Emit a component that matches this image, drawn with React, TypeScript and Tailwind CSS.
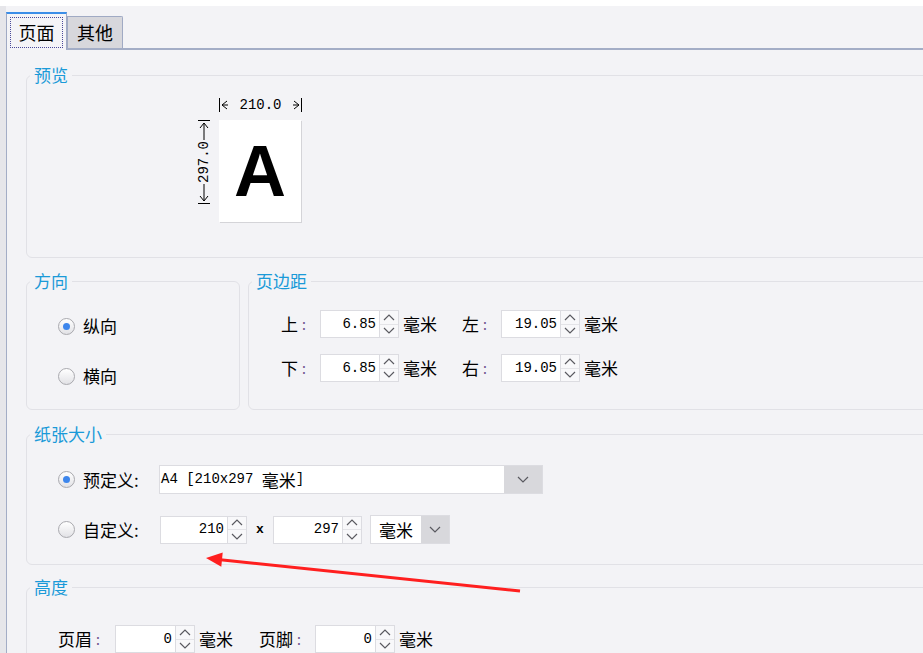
import type { ReactNode } from 'react'

const cjk = "font-['Noto_Sans_CJK_SC',sans-serif]"
const mono = "font-['Liberation_Mono','Noto_Sans_CJK_SC',monospace]"

function Group({ title, className, children }: { title: string; className?: string; children: ReactNode }) {
  return (
    <fieldset className={`border border-[#e1e1e6] rounded-[6px] ${className ?? ''}`}>
      <legend className="ml-[3px] px-[4px] text-[17px] leading-[20px] text-[#1a9ad8]">{title}</legend>
      {children}
    </fieldset>
  )
}

function Radio({ checked, label }: { checked?: boolean; label: string }) {
  return (
    <div className="flex items-center h-[28px]">
      <span className="w-[17px] h-[17px] rounded-full border border-[#a9a9ae] bg-linear-to-b from-white to-[#e2e2e6] flex items-center justify-center">
        {checked && <span className="w-[7px] h-[7px] rounded-full bg-[#3d86ec]" />}
      </span>
      <span className="ml-[8px] text-[17px] text-black">{label}</span>
    </div>
  )
}

function Chevron({ up }: { up?: boolean }) {
  return (
    <svg width="12" height="7" viewBox="0 0 12 7">
      <polyline
        points={up ? '1,6 6,1 11,6' : '1,1 6,6 11,1'}
        fill="none"
        stroke="#5a5a60"
        strokeWidth="1.2"
      />
    </svg>
  )
}

function Spin({ value, width }: { value: string; width: number }) {
  return (
    <div className="flex h-[28px] shrink-0">
      <div
        className={`bg-white border border-[#dcdce1] border-r-0 flex items-center justify-end pr-[3px] text-[14px] text-black ${mono}`}
        style={{ width }}
      >
        {value}
      </div>
      <div className="w-[20px] flex flex-col border border-[#dcdce1] bg-[#f8f8fa]">
        <div className="flex-1 flex items-center justify-center border-b border-[#e4e4e8]">
          <Chevron up />
        </div>
        <div className="flex-1 flex items-center justify-center">
          <Chevron />
        </div>
      </div>
    </div>
  )
}

function Label({ text, width }: { text: string; width: number }) {
  return (
    <div className="flex items-center shrink-0 text-[17px] text-black" style={{ width }}>
      <span>{text}</span>
      <span className="ml-[4px] text-[#6d4d8c] text-[14px]">:</span>
    </div>
  )
}

function Unit() {
  return <span className="ml-[4px] shrink-0 text-[17px] text-black">毫米</span>
}

function Preview() {
  return (
    <div className="flex pl-[169px] pt-[12px] pb-[35px]">
      <div className="w-[23px] pt-[23px] flex flex-col items-center pr-[8px]">
        <svg width="14" height="21" viewBox="0 0 14 21">
          <line x1="1" y1="0.5" x2="13" y2="0.5" stroke="#000" />
          <line x1="7" y1="3" x2="7" y2="20" stroke="#000" />
          <polyline points="3,8 7,3 11,8" fill="none" stroke="#000" />
        </svg>
        <span className={`my-[5px] text-[14px] leading-[14px] text-black [writing-mode:vertical-rl] rotate-180 ${mono}`}>
          297.0
        </span>
        <svg width="14" height="21" viewBox="0 0 14 21">
          <line x1="7" y1="1" x2="7" y2="18" stroke="#000" />
          <polyline points="3,13 7,18 11,13" fill="none" stroke="#000" />
          <line x1="1" y1="20.5" x2="13" y2="20.5" stroke="#000" />
        </svg>
      </div>
      <div className="flex flex-col">
        <div className="w-[83px] h-[16px] flex items-center justify-between">
          <svg width="10" height="16" viewBox="0 0 10 16">
            <line x1="0.5" y1="1" x2="0.5" y2="15" stroke="#000" />
            <polyline points="8,4 3,8 8,12" fill="none" stroke="#000" />
            <line x1="3" y1="8" x2="9" y2="8" stroke="#000" />
          </svg>
          <span className={`text-[14px] leading-[16px] text-black ${mono}`}>210.0</span>
          <svg width="10" height="16" viewBox="0 0 10 16">
            <line x1="9.5" y1="1" x2="9.5" y2="15" stroke="#000" />
            <polyline points="2,4 7,8 2,12" fill="none" stroke="#000" />
            <line x1="1" y1="8" x2="7" y2="8" stroke="#000" />
          </svg>
        </div>
        <div className="mt-[7px] w-[82px] h-[102px] bg-white shadow-[1px_1px_0_#d4d4d8] flex items-center justify-center">
          <span className="font-['Liberation_Sans',Arial,sans-serif] font-bold text-[72px] leading-none text-black">A</span>
        </div>
      </div>
    </div>
  )
}

export default function App() {
  return (
    <div className={`relative w-[923px] h-[653px] overflow-hidden bg-white ${cjk}`}>
      <div className="h-[6px] bg-white" />
      <div className="flex h-[647px] overflow-hidden">
        <div className="w-[6px] shrink-0 bg-[#e6e6ea]" />
        <div className="flex-1 min-w-0 flex flex-col bg-[#f3f3f6]">
          <div className="h-[42px] shrink-0 flex items-end">
            <div className="relative z-10 -mb-[2px] w-[61px] h-[38px] bg-[#f4f4f7] border-l border-r border-[#a0aac4] border-t-2 border-t-[#3b8ee8] p-[3px]">
              <div className="h-[31px] border border-dotted border-[#4a4a9a] flex items-center justify-center text-[18px] text-black">
                页面
              </div>
            </div>
            <div className="w-[56px] h-[32px] bg-[#d7d7dc] border border-b-0 border-[#a0aac4] rounded-tr-[2px] flex items-center justify-center text-[18px] text-black">
              其他
            </div>
          </div>
          <div className="flex-1 min-h-0 border-t-2 border-l border-[#a3adc6] pl-[19px] pt-[15px]">
            <div className="w-[910px] flex flex-col">
              <Group title="预览">
                <Preview />
              </Group>

              <div className="flex gap-[8px] mt-[13px]">
                <Group title="方向" className="w-[214px] shrink-0">
                  <div className="pl-[31px] pt-[21px] pb-[19px] flex flex-col gap-[22px]">
                    <Radio checked label="纵向" />
                    <Radio label="横向" />
                  </div>
                </Group>
                <Group title="页边距" className="flex-1">
                  <div className="pl-[32px] pt-[19px] flex flex-col gap-[16px]">
                    <div className="flex items-center">
                      <Label text="上" width={39} />
                      <Spin value="6.85" width={59} />
                      <Unit />
                      <div className="w-[25px] shrink-0" />
                      <Label text="左" width={39} />
                      <Spin value="19.05" width={59} />
                      <Unit />
                    </div>
                    <div className="flex items-center">
                      <Label text="下" width={39} />
                      <Spin value="6.85" width={59} />
                      <Unit />
                      <div className="w-[25px] shrink-0" />
                      <Label text="右" width={39} />
                      <Spin value="19.05" width={59} />
                      <Unit />
                    </div>
                  </div>
                </Group>
              </div>

              <Group title="纸张大小" className="mt-[14px]">
                <div className="pl-[31px] pt-[21px] pb-[20px] flex flex-col gap-[21px]">
                  <div className="flex items-center h-[29px]">
                    <div className="w-[101px] shrink-0">
                      <Radio checked label="预定义:" />
                    </div>
                    <div className="flex h-[29px] w-[384px] border border-[#dcdce1]">
                      <div className="flex-1 bg-white flex items-center pl-[1px] text-black whitespace-pre">
                        <span className={`text-[14px] ${mono}`}>A4 [210x297 </span>
                        <span className="text-[17px]">毫米</span>
                        <span className={`text-[14px] ${mono}`}>]</span>
                      </div>
                      <div className="w-[38px] bg-[#d8d8dc] flex items-center justify-center">
                        <Chevron />
                      </div>
                    </div>
                  </div>
                  <div className="flex items-center h-[29px]">
                    <div className="w-[102px] shrink-0">
                      <Radio label="自定义:" />
                    </div>
                    <Spin value="210" width={67} />
                    <span className={`w-[26px] text-center text-[13px] font-bold text-black ${mono}`}>x</span>
                    <Spin value="297" width={69} />
                    <div className="ml-[8px] flex h-[29px] w-[80px] border border-[#dcdce1]">
                      <div className="w-[50px] bg-white flex items-center justify-center text-[17px] text-black">毫米</div>
                      <div className="flex-1 bg-[#d8d8dc] flex items-center justify-center">
                        <Chevron />
                      </div>
                    </div>
                  </div>
                </div>
              </Group>

              <Group title="高度" className="mt-[12px]">
                <div className="pl-[31px] pt-[28px] pb-[20px] flex items-center">
                  <Label text="页眉" width={57} />
                  <Spin value="0" width={60} />
                  <Unit />
                  <div className="w-[26px] shrink-0" />
                  <Label text="页脚" width={56} />
                  <Spin value="0" width={60} />
                  <Unit />
                </div>
              </Group>
            </div>
          </div>
        </div>
      </div>

      <svg className="absolute inset-0 pointer-events-none" width="923" height="653" viewBox="0 0 923 653">
        <line x1="520" y1="591" x2="218" y2="559.5" stroke="#ff1f1f" strokeWidth="3" />
        <polygon points="206,558 222.7,552.5 221.3,566.8" fill="#ff1f1f" />
      </svg>
    </div>
  )
}
